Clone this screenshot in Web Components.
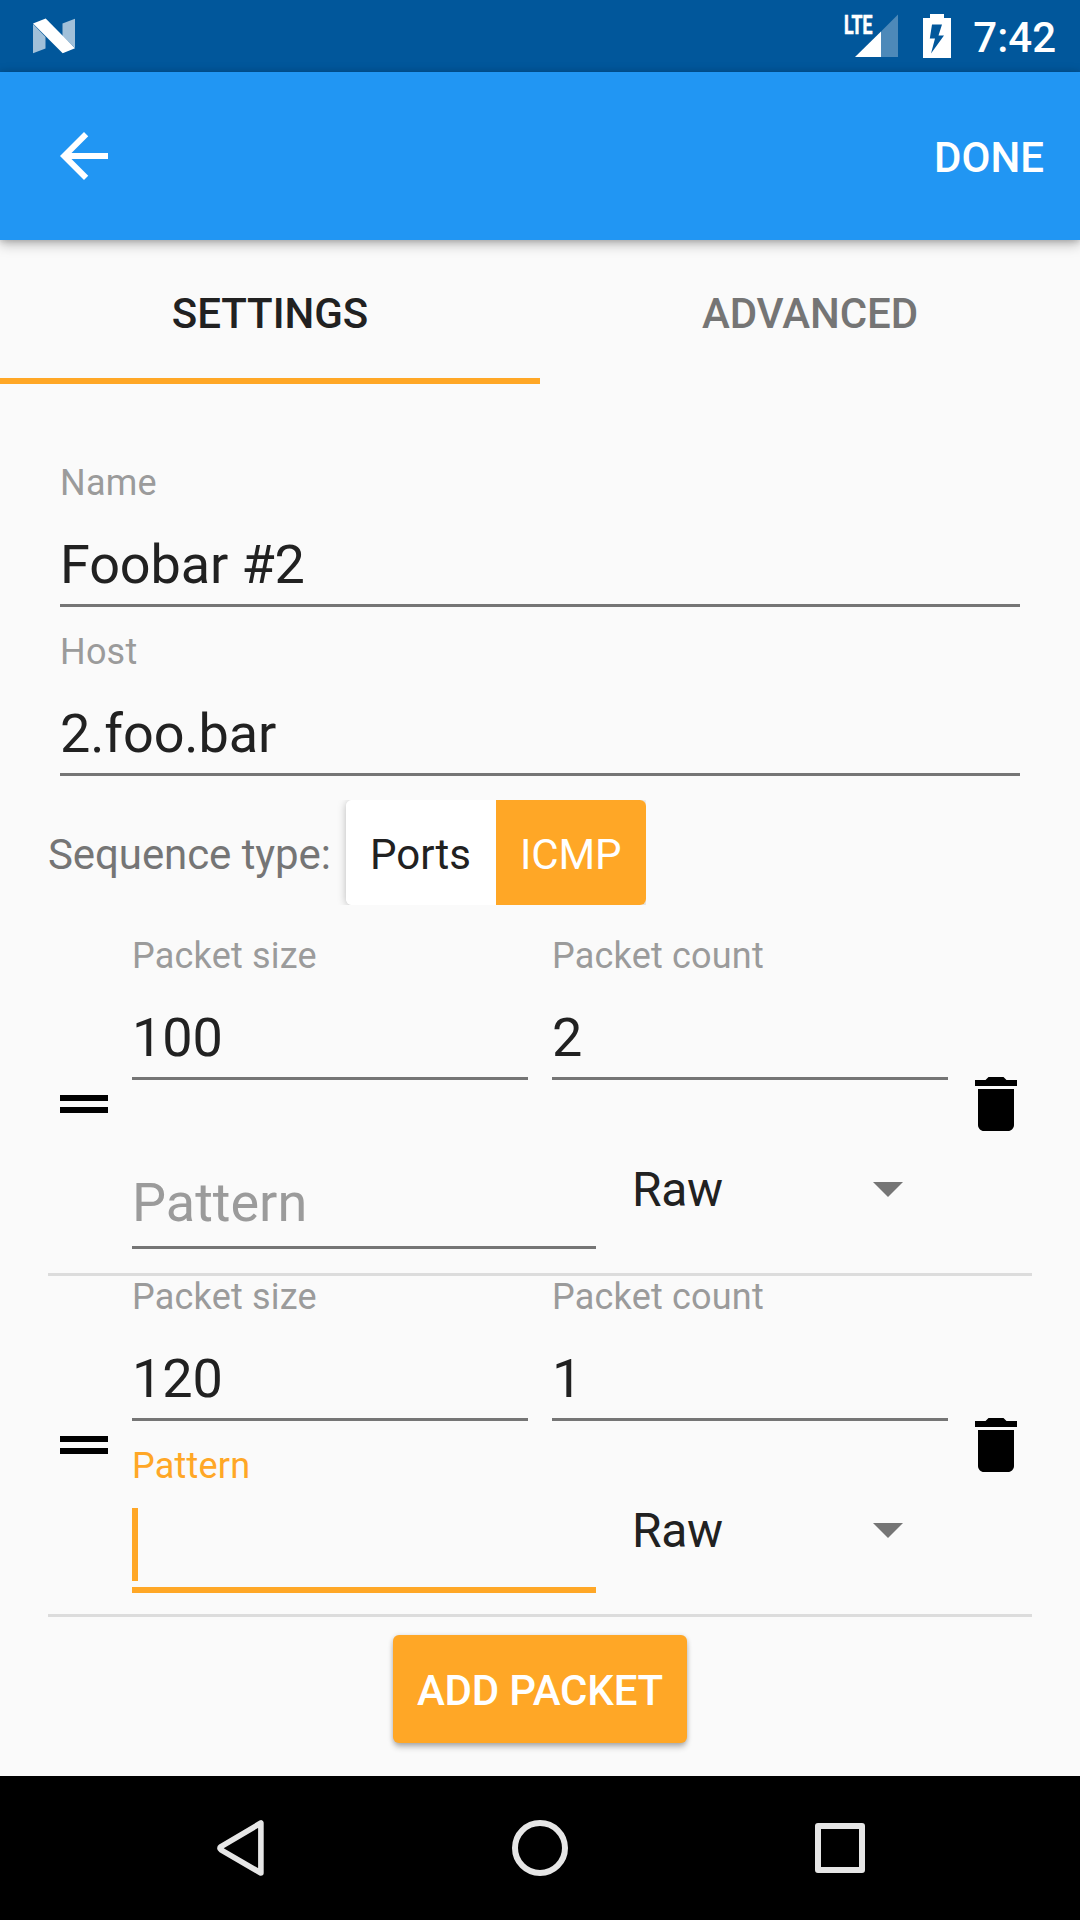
<!DOCTYPE html>
<html lang="en">
<head>
<meta charset="utf-8">
<title>Settings</title>
<style>
html, body { margin: 0; padding: 0; }
body { width: 1080px; height: 1920px; overflow: hidden; background: #fafafa; font-family: Roboto, "Noto Sans", sans-serif; }
</style>
</head>
<body>
<app-screen></app-screen>
<script>
const define = (name, html) => customElements.define(name, class extends HTMLElement {
  connectedCallback() {
    if (this.shadowRoot) return;
    const t = document.createElement('template');
    t.innerHTML = typeof html === 'function' ? html(this) : html;
    this.attachShadow({ mode: 'open' }).append(t.content.cloneNode(true));
  }
});

define('status-bar', `
<style>
:host { display: flex; height: 72px; background: #01579b; color: #fff; justify-content: space-between; box-sizing: border-box; padding: 0 24px 0 30px; }
svg { display: block; }
.right { display: flex; }
.clock { font-size: 42px; font-weight: 500; line-height: 49px; margin: 13px 0 0 22px; }
.batt { margin-left: 24px; }
</style>
<svg width="48" height="72" viewBox="30 0 48 72">
  <path d="M33 24L45.500 37V48.500L33 53.300Z" fill="#a1c0d9"/>
  <path d="M75 18.800V48L62.500 36V23.500Z" fill="#a1c0d9"/>
  <path d="M33 23.600L45.700 18.500L75 48.300L62.700 53.300Z" fill="#fff"/>
</svg>
<div class="right">
  <svg width="55" height="72" viewBox="844 0 55 72">
    <text x="844" y="33.500" font-family="Roboto" font-weight="700" font-size="26" textLength="28.500" lengthAdjust="spacingAndGlyphs" fill="#fff" stroke="#fff" stroke-width=".7">LTE</text>
    <path d="M898 14.500V57H881V31.500Z" fill="#4d89b9"/>
    <path d="M881 31.500V57H855Z" fill="#fff"/>
  </svg>
  <svg class="batt" width="28" height="72" viewBox="923 0 28 72">
    <path fill="#fff" fill-rule="evenodd" d="M930 14H944V18H951V58H923V18H930ZM932 24.500L929.800 38.500H935L931 53.500L944 35.500H938.500L942 24.500Z"/>
  </svg>
  <span class="clock">7:42</span>
</div>`);

define('app-toolbar', `
<style>
:host { display: flex; height: 168px; box-sizing: border-box; padding: 0 36px 0 48px; align-items: center; justify-content: space-between; background: #2196f3; color: #fff; box-shadow: 0 4px 12px rgba(0,0,0,.28), 0 1px 6px rgba(0,0,0,.16); z-index: 1; }
svg { display: block; }
span { font-size: 42px; font-weight: 500; line-height: 49px; margin-top: 3px; }
</style>
<svg width="72" height="72" viewBox="0 0 24 24"><path fill="#fff" d="M20 11H7.830l5.590-5.590L12 4l-8 8 8 8 1.410-1.410L7.830 13H20v-2z"/></svg>
<span><slot></slot></span>`);

define('tab-item', `
<style>
:host { flex: 1; display: flex; box-sizing: border-box; height: 144px; align-items: center; justify-content: center; border-top: 6px solid transparent; border-bottom: 6px solid transparent; color: #757575; font-size: 42px; font-weight: 500; line-height: 49px; letter-spacing: -.05px; }
:host([selected]) { color: #212121; border-bottom-color: #ffa726; }
span { margin-top: 2px; }
</style><span><slot></slot></span>`);

define('text-field', el => `
<style>
:host { display: flex; flex-direction: column; height: 145px; font-size: 54px; color: #212121; }
.label { height: 42px; line-height: 42px; font-size: 36px; letter-spacing: .2px; color: #9b9b9b; }
.value { height: 63px; line-height: 63px; margin-top: 29px; white-space: pre; letter-spacing: -.12px; }
.line { height: 3px; background: #757575; margin-top: 8px; }
:host([empty]) .value { color: #9b9b9b; margin-top: 25px; letter-spacing: 0; }
:host([empty]) .line { margin-top: 12px; }
:host([focused]) .label { color: #ffa726; }
.label, .value, .caret { flex: none; }
.caret { width: 6px; height: 73px; margin-top: 21px; background: #ffa726; }
:host([focused]) .line { height: 6px; flex: none; margin-top: 6px; background: #ffa726; }
</style>
<div class="label">${el.hasAttribute('empty') ? '' : el.getAttribute('label')}</div>
${el.hasAttribute('focused') ? '<div class="caret"></div>' : '<div class="value"><slot></slot></div>'}
<div class="line"></div>`);

define('toggle-group', `
<style>
:host { display: flex; width: 300px; height: 105px; border-radius: 6px; font-size: 42px; line-height: 49px; box-shadow: 0 1px 8px rgba(0,0,0,.26); clip-path: inset(0 0 0 -14px); }
div { flex: 1; box-sizing: border-box; padding: 30px 0 0 24px; background: #fff; color: #212121; border-radius: 6px 0 0 6px; }
.on { background: #ffa726; color: #fff; border-radius: 0 6px 6px 0; letter-spacing: -.15px; }
</style>
<div><slot name="off"></slot></div><div class="on"><slot name="on"></slot></div>`);

define('drop-down', `
<style>
:host { display: flex; justify-content: space-between; font-size: 48px; line-height: 56px; color: #212121; letter-spacing: -.3px; }
svg { display: block; margin-top: 20px; }
</style>
<span><slot></slot></span><svg width="30" height="15" viewBox="0 0 30 15"><path d="M0 0H30L15 15Z" fill="#757575"/></svg>`);

define('packet-row', `
<style>
:host { display: flex; align-items: center; height: 338px; border-bottom: 3px solid #dcdcdc; }
svg { display: block; flex: none; }
.body { width: 816px; margin: 0 12px; height: 338px; display: flex; flex-direction: column; gap: 24px; }
.row { display: flex; gap: 24px; }
.row ::slotted(text-field) { flex: 1; }
.row.two ::slotted(text-field) { flex: 0 0 464px; }
.two ::slotted(drop-down) { margin: 58px 0 0 12px; width: 271px; }
</style>
<svg width="72" height="72" viewBox="0 0 24 24"><path d="M20 9H4v2h16V9zM4 15h16v-2H4v2z"/></svg>
<div class="body">
  <div class="row"><slot name="size"></slot><slot name="count"></slot></div>
  <div class="row two"><slot name="pattern"></slot><slot name="format"></slot></div>
</div>
<svg width="72" height="72" viewBox="0 0 24 24"><path d="M6 19c0 1.100.900 2 2 2h8c1.100 0 2-.900 2-2V7H6v12zM19 4h-3.500l-1-1h-5l-1 1H5v2h14V4z"/></svg>`);

define('raised-button', `
<style>
:host { display: flex; align-items: center; justify-content: center; width: 294px; height: 108px; border-radius: 6px; background: #ffa726; color: #fff; font-size: 42px; font-weight: 500; line-height: 49px; letter-spacing: -.2px; box-shadow: 0 5px 6px -1px rgba(0,0,0,.24), 0 1px 5px rgba(0,0,0,.18); }
span { margin-top: 3px; }
</style><span><slot></slot></span>`);

define('nav-bar', `
<style>
:host { display: flex; height: 144px; background: #000; align-items: center; justify-content: center; gap: 228px; }
svg { display: block; }
</style>
<svg width="72" height="72" viewBox="0 0 72 72" fill="none" stroke="#e6e6e6" stroke-width="5.600" stroke-linejoin="round"><path d="M56.900 11V61L17 37.800Q14.800 36.200 17 34.600Z"/></svg>
<svg width="72" height="72" viewBox="0 0 72 72" fill="none" stroke="#e6e6e6" stroke-width="6"><circle cx="36" cy="36" r="25"/></svg>
<svg width="72" height="72" viewBox="0 0 72 72" fill="none" stroke="#e6e6e6" stroke-width="6" stroke-linejoin="round"><rect x="14" y="14" width="44" height="44"/></svg>`);

define('app-screen', `
<style>
:host { display: flex; flex-direction: column; width: 1080px; height: 1920px; background: #fafafa; }
.tabs { display: flex; }
main { flex: 1; display: flex; flex-direction: column; padding: 78px 48px 0; }
.fields { display: flex; flex-direction: column; gap: 24px; padding: 0 12px; }
.seq { display: flex; gap: 15px; margin: 24px 0 30px; font-size: 42px; line-height: 49px; color: #757575; }
.seq .cap { padding-top: 30px; width: 283px; white-space: nowrap; letter-spacing: -.08px; }
raised-button { align-self: center; margin-top: 18px; }
</style>
<status-bar></status-bar>
<app-toolbar>DONE</app-toolbar>
<div class="tabs"><tab-item selected>SETTINGS</tab-item><tab-item>ADVANCED</tab-item></div>
<main>
  <div class="fields">
    <text-field label="Name">Foobar #2</text-field>
    <text-field label="Host">2.foo.bar</text-field>
  </div>
  <div class="seq"><span class="cap">Sequence type:</span><toggle-group><span slot="off">Ports</span><span slot="on">ICMP</span></toggle-group></div>
  <packet-row>
    <text-field slot="size" label="Packet size">100</text-field>
    <text-field slot="count" label="Packet count">2</text-field>
    <text-field slot="pattern" empty>Pattern</text-field>
    <drop-down slot="format">Raw</drop-down>
  </packet-row>
  <packet-row>
    <text-field slot="size" label="Packet size">120</text-field>
    <text-field slot="count" label="Packet count">1</text-field>
    <text-field slot="pattern" label="Pattern" focused></text-field>
    <drop-down slot="format">Raw</drop-down>
  </packet-row>
  <raised-button>ADD PACKET</raised-button>
</main>
<nav-bar></nav-bar>`);
</script>
</body>
</html>
